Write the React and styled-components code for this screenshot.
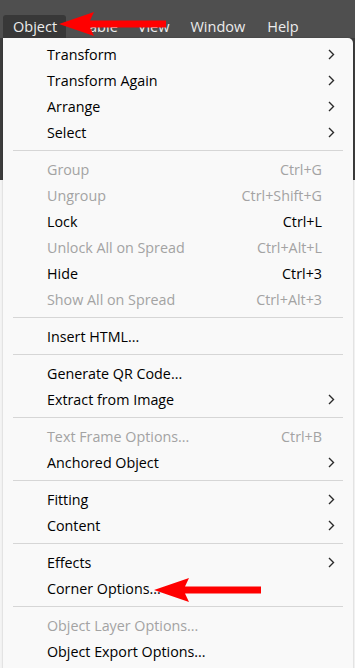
import React from "react";
import styled, { createGlobalStyle } from "styled-components";

const GlobalStyle = createGlobalStyle`
  html, body {
    margin: 0;
    padding: 0;
    background: #ffffff;
    font-family: "Open Sans", "Noto Sans", sans-serif;
  }
`;

const Page = styled.div`
  position: relative;
  width: 355px;
  height: 668px;
  overflow: hidden;
  background: linear-gradient(to bottom, #3d3d3d 0, #3d3d3d 180px, #f4f4f4 180px);
`;

const MenuBar = styled.div`
  height: 38px;
  background: #4f4f4f;
  display: flex;
  align-items: flex-end;
  padding-left: 3px;
  box-sizing: border-box;
`;

const BarItem = styled.div`
  height: 23px;
  padding: ${(p) => (p.active ? "0 9px 0 10px" : "0")};
  margin-right: ${(p) => p.gap || 0}px;
  display: flex;
  align-items: center;
  font-size: 14.5px;
  color: #ececec;
  background: ${(p) => (p.active ? "#383838" : "transparent")};
  border-radius: 3px 3px 0 0;
`;

const Panel = styled.div`
  margin: 0 2px 0 3px;
  padding: 3px 0 20px;
  background: #f9f9f9;
  border-radius: 0 5px 0 0;
  box-shadow: 0 0 2px rgba(0, 0, 0, 0.25);
`;

const Row = styled.div`
  height: 26px;
  display: flex;
  align-items: center;
  padding-left: 44px;
  font-size: 14.3px;
  color: ${(p) => (p.disabled ? "#a3a3a3" : "#000000")};
`;

const Label = styled.span`
  flex: 1;
  white-space: nowrap;
`;

const Shortcut = styled.span`
  white-space: nowrap;
`;

const SubCell = styled.span`
  width: 31px;
  padding-left: 6px;
  box-sizing: border-box;
  display: flex;
  align-items: center;
`;

const Separator = styled.div`
  height: 11px;
  display: flex;
  align-items: center;
  padding: 0 10px;

  &::after {
    content: "";
    flex: 1;
    height: 1px;
    background: #d6d6d6;
  }
`;

const Pointer = styled.svg`
  position: absolute;
  left: ${(p) => p.x}px;
  top: ${(p) => p.y}px;
`;

const Chevron = () => (
  <svg width="7" height="11" viewBox="0 0 7 11">
    <polyline points="1,1 5.5,5.5 1,10" fill="none" stroke="#2b2b2b" strokeWidth="1.4" />
  </svg>
);

const RedArrow = ({ x, y }) => (
  <Pointer x={x} y={y} width="108" height="24" viewBox="0 0 108 24">
    <polygon
      points="0,12 35,0 31,8.5 107,8.5 107,15.5 31,15.5 35,24"
      fill="#ff0000"
    />
  </Pointer>
);

const groups = [
  [
    { label: "Transform", sub: true },
    { label: "Transform Again", sub: true },
    { label: "Arrange", sub: true },
    { label: "Select", sub: true },
  ],
  [
    { label: "Group", key: "Ctrl+G", disabled: true },
    { label: "Ungroup", key: "Ctrl+Shift+G", disabled: true },
    { label: "Lock", key: "Ctrl+L" },
    { label: "Unlock All on Spread", key: "Ctrl+Alt+L", disabled: true },
    { label: "Hide", key: "Ctrl+3" },
    { label: "Show All on Spread", key: "Ctrl+Alt+3", disabled: true },
  ],
  [{ label: "Insert HTML..." }],
  [
    { label: "Generate QR Code..." },
    { label: "Extract from Image", sub: true },
  ],
  [
    { label: "Text Frame Options...", key: "Ctrl+B", disabled: true },
    { label: "Anchored Object", sub: true },
  ],
  [
    { label: "Fitting", sub: true },
    { label: "Content", sub: true },
  ],
  [
    { label: "Effects", sub: true },
    { label: "Corner Options..." },
  ],
  [
    { label: "Object Layer Options...", disabled: true },
    { label: "Object Export Options..." },
  ],
];

const MenuRow = ({ label, shortcut, sub, disabled }) => (
  <Row disabled={disabled}>
    <Label>{label}</Label>
    {shortcut && <Shortcut>{shortcut}</Shortcut>}
    <SubCell>{sub && <Chevron />}</SubCell>
  </Row>
);

const App = () => {
  return (
    <Page>
      <GlobalStyle />
      <MenuBar>
        <BarItem active gap={15}>Object</BarItem>
        <BarItem gap={20}>Table</BarItem>
        <BarItem gap={21}>View</BarItem>
        <BarItem gap={22}>Window</BarItem>
        <BarItem>Help</BarItem>
      </MenuBar>
      <Panel>
        {groups.map((items, gi) => (
          <React.Fragment key={gi}>
            {gi > 0 && <Separator />}
            {items.map((it) => (
              <MenuRow
                key={it.label}
                label={it.label}
                shortcut={it.key}
                sub={it.sub}
                disabled={it.disabled}
              />
            ))}
          </React.Fragment>
        ))}
      </Panel>
      <RedArrow x={59} y={12} />
      <RedArrow x={154} y={578} />
    </Page>
  );
};

export default App;
